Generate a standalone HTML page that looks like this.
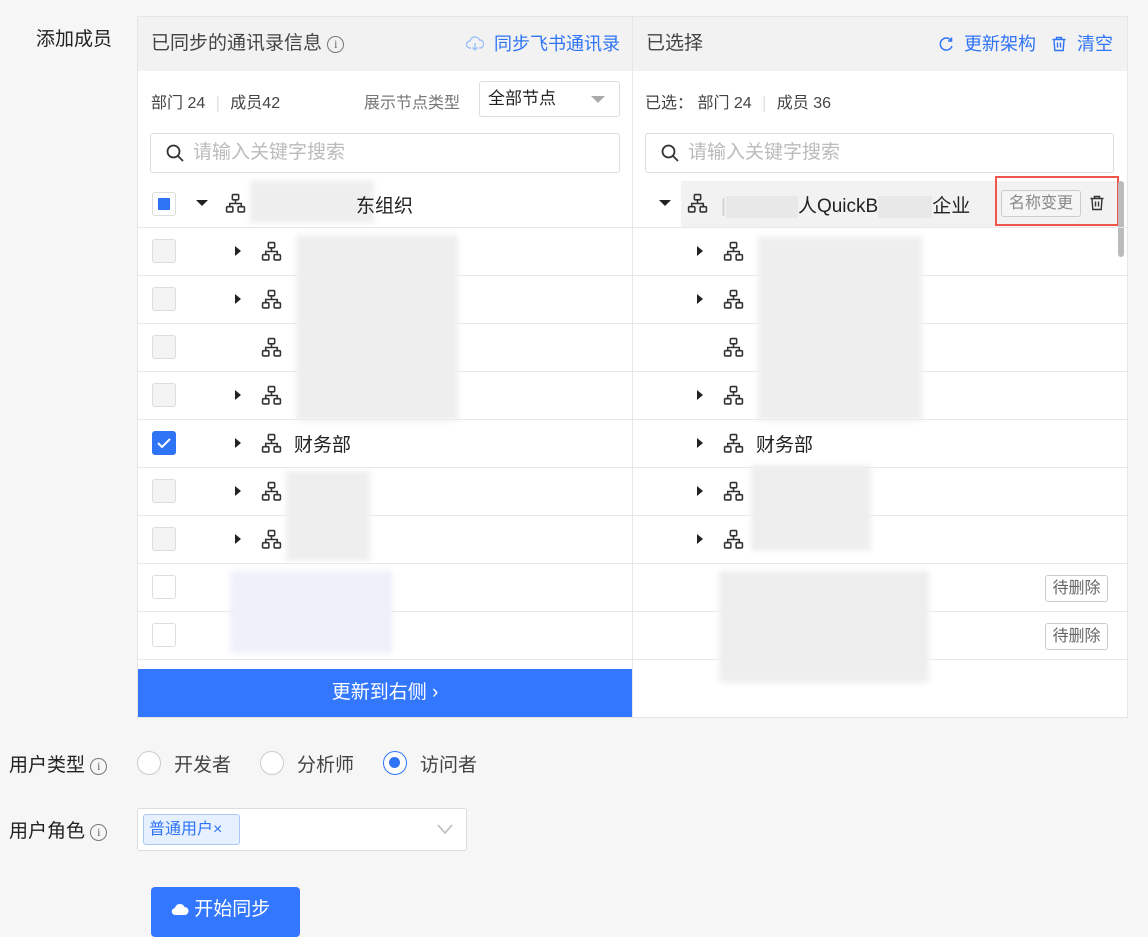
<!DOCTYPE html>
<html><head><meta charset="utf-8"><style>
*{box-sizing:border-box;margin:0;padding:0}
body{width:1148px;height:930px;background:#f6f6f6;font-family:"Liberation Sans","Noto Sans CJK SC",sans-serif;color:#333;position:relative;overflow:hidden}
.a{position:absolute}
.panel{position:absolute;top:16px;height:702px;background:#fff;border:1px solid #e6e6e6}
.hd{position:absolute;left:0;right:0;top:0;height:54px;background:#f2f2f2;font-size:19px;color:#444;line-height:54px;padding-left:13px}
.blue{color:#2f74f5}
.sep{position:absolute;left:0;right:0;height:1px;background:#e8e8e8}
.cb{position:absolute;width:24px;height:24px;border:1px solid #ddd;border-radius:3px;background:#f4f4f4}
.car{position:absolute;width:0;height:0;border-top:5px solid transparent;border-bottom:5px solid transparent;border-left:6px solid #222}
.search{position:absolute;height:40px;border:1px solid #ddd;border-radius:3px;font-size:19px;color:#bbb;line-height:38px;padding-left:42px}
.blur{position:absolute;background:#eeeeee;filter:blur(3px)}
.t{font-size:19px;color:#222;position:absolute}
.info{display:inline-block;width:17px;height:17px;border:1.3px solid #777;border-radius:50%;font-size:12px;line-height:15px;text-align:center;vertical-align:1px;color:#666;font-family:"Liberation Serif",serif}
</style></head><body>
<svg width="0" height="0" style="position:absolute"><defs>
<symbol id="org" viewBox="0 0 20 20"><g fill="none" stroke="#333" stroke-width="1.5"><rect x="7" y="1.5" width="6" height="5" rx="1"/><rect x="1.5" y="13" width="6" height="5" rx="1"/><rect x="12.5" y="13" width="6" height="5" rx="1"/><path d="M10 6.5v3.5M4.5 13v-3h11v3"/></g></symbol>
<symbol id="srch" viewBox="0 0 20 20"><g fill="none" stroke="#333" stroke-width="1.8"><circle cx="8.5" cy="8.5" r="6"/><path d="M13 13l5 5"/></g></symbol>
<symbol id="trash" viewBox="0 0 16 16"><g fill="none" stroke-width="1.4"><path d="M1.5 3.5h13M5.5 3.5V1.5h5v2M3 3.5l.8 11h8.4l.8-11M6.5 6.5v5M9.5 6.5v5"/></g></symbol>
</defs></svg>

<div class="a" style="left:36px;top:24px;font-size:19px;color:#222">添加成员</div>

<!-- left panel -->
<div class="panel" style="left:137px;width:496px">
 <div class="hd">已同步的通讯录信息 <span class="info">i</span>
  <span class="a blue" style="right:12px;top:0;font-size:18px"><svg width="18" height="16" style="vertical-align:-2px" viewBox="0 0 18 16"><path d="M5 12H4a3.5 3.5 0 0 1 0-7 5 5 0 0 1 9.5-1A4 4 0 0 1 14 12h-1M9 7v7M6.5 11.5L9 14l2.5-2.5" fill="none" stroke="#9cc0f7" stroke-width="1.4"/></svg>&nbsp; 同步飞书通讯录</span></div>
 <div class="a" style="left:13px;top:72px;font-size:16px;color:#444">部门 24 <span style="color:#ddd;margin:0 6px">|</span> 成员42</div>
 <div class="a" style="left:226px;top:72px;font-size:16px;color:#777">展示节点类型</div>
 <div class="a" style="left:341px;top:64px;width:141px;height:36px;border:1px solid #ddd;border-radius:3px;font-size:17px;line-height:34px;padding-left:8px;color:#222">全部节点<span class="a" style="right:14px;top:14px;border-left:7px solid transparent;border-right:7px solid transparent;border-top:7px solid #aaa"></span></div>
 <div class="search" style="left:12px;top:116px;width:470px"><svg class="a" style="left:14px;top:9px" width="20" height="20"><use href="#srch"/></svg>请输入关键字搜索</div>
 <div class="cb" style="left:14px;top:175px;background:#fff"><div class="a" style="left:5px;top:5px;width:12px;height:12px;background:#2f74f5"></div></div>
 <div class="a" style="left:58px;top:183px;border-left:6px solid transparent;border-right:6px solid transparent;border-top:6px solid #222"></div>
 <svg class="a" style="left:87px;top:176px" width="21" height="21"><use href="#org"/></svg>
 <div class="blur" style="left:112px;top:164px;width:124px;height:42px"></div>
 <div class="t" style="left:218px;top:174px">东组织</div>
 <div class="sep" style="top:210px"></div>
 <div class="cb" style="left:14px;top:222px"></div><div class="car" style="left:97px;top:229px"></div><svg class="a" style="left:123px;top:224px" width="21" height="21"><use href="#org"/></svg><div class="sep" style="top:258px"></div>
 <div class="cb" style="left:14px;top:270px"></div><div class="car" style="left:97px;top:277px"></div><svg class="a" style="left:123px;top:272px" width="21" height="21"><use href="#org"/></svg><div class="sep" style="top:306px"></div>
 <div class="cb" style="left:14px;top:318px"></div><svg class="a" style="left:123px;top:320px" width="21" height="21"><use href="#org"/></svg><div class="sep" style="top:354px"></div>
 <div class="cb" style="left:14px;top:366px"></div><div class="car" style="left:97px;top:373px"></div><svg class="a" style="left:123px;top:368px" width="21" height="21"><use href="#org"/></svg><div class="sep" style="top:402px"></div>
 <div class="cb" style="left:14px;top:414px;background:#2f74f5;border-color:#2f74f5"><svg width="22" height="22"><path d="M5 11l4 4 8-8" fill="none" stroke="#fff" stroke-width="2"/></svg></div><div class="car" style="left:97px;top:421px"></div><svg class="a" style="left:123px;top:416px" width="21" height="21"><use href="#org"/></svg><div class="t" style="left:156px;top:413px">财务部</div><div class="sep" style="top:450px"></div>
 <div class="cb" style="left:14px;top:462px"></div><div class="car" style="left:97px;top:469px"></div><svg class="a" style="left:123px;top:464px" width="21" height="21"><use href="#org"/></svg><div class="sep" style="top:498px"></div>
 <div class="cb" style="left:14px;top:510px"></div><div class="car" style="left:97px;top:517px"></div><svg class="a" style="left:123px;top:512px" width="21" height="21"><use href="#org"/></svg><div class="sep" style="top:546px"></div>
 <div class="cb" style="left:14px;top:558px;background:#fff"></div><div class="sep" style="top:594px"></div>
 <div class="cb" style="left:14px;top:606px;background:#fff"></div><div class="sep" style="top:642px"></div>
 <div class="blur" style="left:158px;top:218px;width:162px;height:186px"></div>
 <div class="blur" style="left:148px;top:454px;width:84px;height:90px"></div>
 <div class="blur" style="left:92px;top:554px;width:162px;height:82px;background:#eef0fa"></div>
 <div class="a" style="left:0;top:652px;width:494px;height:48px;background:#3377ff;color:#fff;font-size:19px;text-align:center;line-height:48px">更新到右侧 ›</div>
</div>

<!-- right panel -->
<div class="panel" style="left:632px;width:496px">
 <div class="hd">已选择<span class="a blue" style="right:14px;top:0;font-size:18px"><svg width="16" height="16" viewBox="0 0 16 16" style="vertical-align:-2px"><path d="M13.5 5A6 6 0 1 0 14 10M13.5 1.5V5H10" fill="none" stroke="#2f74f5" stroke-width="1.5"/></svg>&nbsp; 更新架构 &nbsp; <svg width="16" height="16" style="vertical-align:-2px;stroke:#2f74f5"><use href="#trash"/></svg>&nbsp; 清空</span></div>
 <div class="a" style="left:12px;top:72px;font-size:16px;color:#444">已选：&nbsp;部门 24 <span style="color:#ddd;margin:0 6px">|</span> 成员 36</div>
 <div class="search" style="left:12px;top:116px;width:469px"><svg class="a" style="left:14px;top:9px" width="20" height="20"><use href="#srch"/></svg>请输入关键字搜索</div>
 <div class="a" style="left:48px;top:164px;width:440px;height:46px;background:#f2f2f2"></div>
 <div class="a" style="left:26px;top:183px;border-left:6px solid transparent;border-right:6px solid transparent;border-top:6px solid #222"></div>
 <svg class="a" style="left:54px;top:176px" width="21" height="21"><use href="#org"/></svg>
 <div class="t" style="left:88px;top:174px"><span style="color:#ccc">|</span><span style="display:inline-block;width:72px;background:#e8e8e8;color:transparent">x</span>人QuickB<span style="display:inline-block;width:54px;background:#e8e8e8;color:transparent">x</span>企业</div>
 <div class="a" style="left:362px;top:159px;width:124px;height:50px;border:2px solid #f0574a"></div>
 <div class="a" style="left:368px;top:173px;width:80px;height:27px;border:1px solid #ccc;border-radius:3px;font-size:16px;color:#888;line-height:25px;text-align:center;background:#f5f5f5">名称变更</div>
 <svg class="a" style="left:456px;top:178px;stroke:#333" width="16" height="16"><use href="#trash"/></svg>
 <div class="a" style="left:485px;top:164px;width:6px;height:76px;background:#bbb;border-radius:3px"></div>
 <div class="sep" style="top:210px"></div>
 <div class="car" style="left:64px;top:229px"></div><svg class="a" style="left:90px;top:224px" width="21" height="21"><use href="#org"/></svg><div class="sep" style="top:258px"></div>
 <div class="car" style="left:64px;top:277px"></div><svg class="a" style="left:90px;top:272px" width="21" height="21"><use href="#org"/></svg><div class="sep" style="top:306px"></div>
 <svg class="a" style="left:90px;top:320px" width="21" height="21"><use href="#org"/></svg><div class="sep" style="top:354px"></div>
 <div class="car" style="left:64px;top:373px"></div><svg class="a" style="left:90px;top:368px" width="21" height="21"><use href="#org"/></svg><div class="sep" style="top:402px"></div>
 <div class="car" style="left:64px;top:421px"></div><svg class="a" style="left:90px;top:416px" width="21" height="21"><use href="#org"/></svg><div class="t" style="left:123px;top:413px">财务部</div><div class="sep" style="top:450px"></div>
 <div class="car" style="left:64px;top:469px"></div><svg class="a" style="left:90px;top:464px" width="21" height="21"><use href="#org"/></svg><div class="sep" style="top:498px"></div>
 <div class="car" style="left:64px;top:517px"></div><svg class="a" style="left:90px;top:512px" width="21" height="21"><use href="#org"/></svg><div class="sep" style="top:546px"></div>
 <div class="sep" style="top:594px"></div><div class="sep" style="top:642px"></div>
 <div class="a" style="left:412px;top:558px;width:63px;height:27px;border:1px solid #ccc;border-radius:3px;font-size:16px;color:#666;line-height:25px;text-align:center">待删除</div>
 <div class="a" style="left:412px;top:606px;width:63px;height:27px;border:1px solid #ccc;border-radius:3px;font-size:16px;color:#666;line-height:25px;text-align:center">待删除</div>
 <div class="blur" style="left:125px;top:220px;width:164px;height:184px"></div>
 <div class="blur" style="left:118px;top:448px;width:120px;height:86px"></div>
 <div class="blur" style="left:86px;top:554px;width:210px;height:112px"></div>
</div>

<div class="a" style="left:9px;top:750px;font-size:19px;color:#222">用户类型 <span class="info">i</span></div>
<div class="a" style="left:137px;top:751px;width:24px;height:24px;border:1px solid #ccc;border-radius:50%;background:#fff"></div>
<div class="a" style="left:174px;top:750px;font-size:19px;color:#444">开发者</div>
<div class="a" style="left:260px;top:751px;width:24px;height:24px;border:1px solid #ccc;border-radius:50%;background:#fff"></div>
<div class="a" style="left:297px;top:750px;font-size:19px;color:#444">分析师</div>
<div class="a" style="left:383px;top:751px;width:24px;height:24px;border:1.5px solid #2f74f5;border-radius:50%;background:#fff"><div class="a" style="left:5px;top:5px;width:11px;height:11px;border-radius:50%;background:#2f74f5"></div></div>
<div class="a" style="left:420px;top:750px;font-size:19px;color:#444">访问者</div>

<div class="a" style="left:9px;top:816px;font-size:19px;color:#222">用户角色 <span class="info">i</span></div>
<div class="a" style="left:137px;top:808px;width:330px;height:43px;border:1px solid #ddd;border-radius:3px;background:#fff">
 <div class="a" style="left:5px;top:5px;width:97px;height:31px;background:#e6f0ff;border:1px solid #a9c8f7;border-radius:3px;color:#2f74f5;font-size:16px;line-height:29px;padding-left:5px">普通用户×</div>
 <svg class="a" style="left:299px;top:14px" width="16" height="12"><path d="M1 2l7 8 7-8" fill="none" stroke="#bbb" stroke-width="1.5"/></svg>
</div>
<div class="a" style="left:151px;top:887px;width:149px;height:50px;background:#3377ff;border-radius:4px;color:#fff;font-size:19px;line-height:46px;padding-left:20px"><svg width="18" height="14" viewBox="0 0 18 14" style="vertical-align:-1px"><path d="M4.5 13a3.5 3.5 0 0 1-.5-7A5 5 0 0 1 13.5 5 4 4 0 0 1 13.5 13z" fill="#fff"/></svg> 开始同步</div>
</body></html>
